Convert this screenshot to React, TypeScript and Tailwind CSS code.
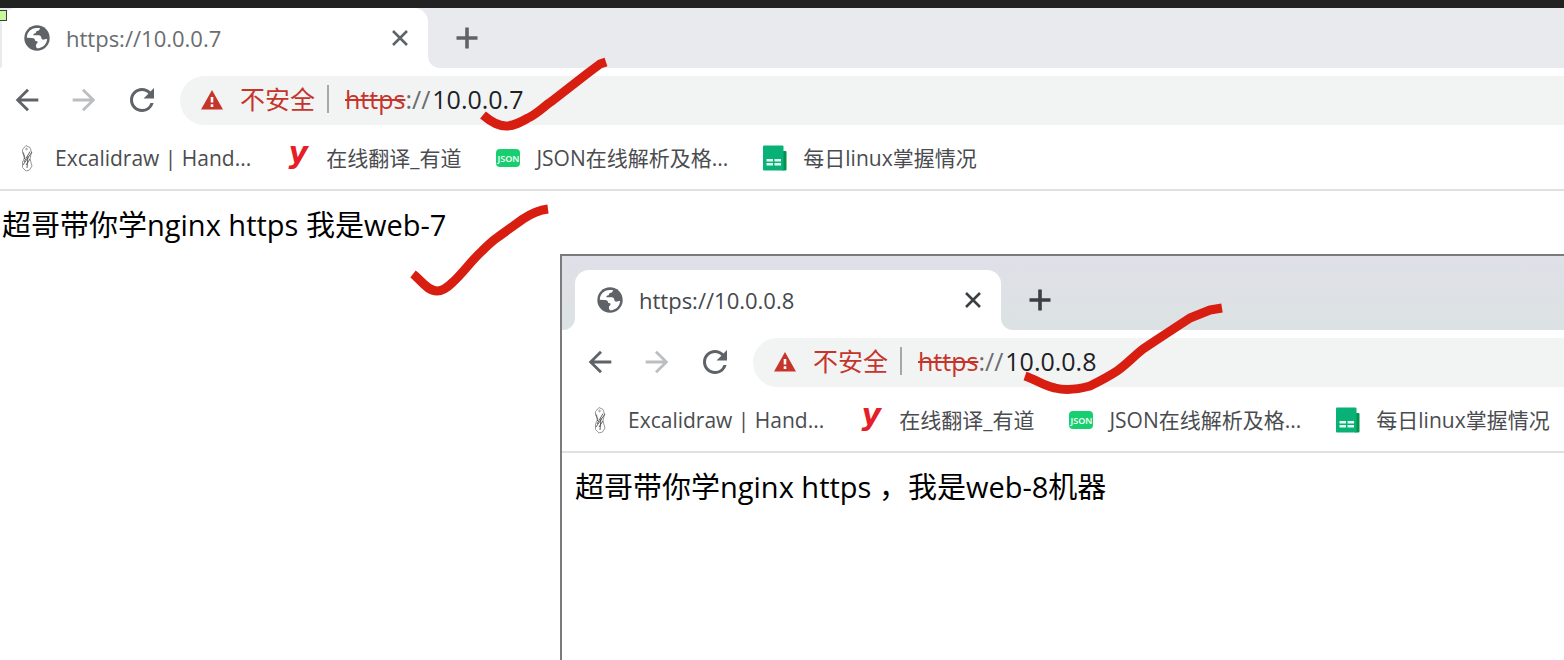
import React from "react";
import { MdArrowBack, MdArrowForward, MdRefresh } from "react-icons/md";

function GlobeIcon() {
  return (
    <svg viewBox="0 0 26 26" className="size-[26px] shrink-0" aria-hidden="true">
      <circle cx="13" cy="13" r="12.700" fill="currentColor" />
      <path
        fill="white"
        d="M2.800 12.800C3 7 7 3.200 12.500 3L16 3C15.800 5 14.500 5.800 13 6C12 6.200 12.200 7.500 11.500 8.300C10 8.500 9.300 9 9.300 10.200H14.800C16.500 10.400 17.400 11.600 17.400 13.200C17.800 14.500 19 14.900 20 14.500L23.200 13.700C22.700 19.500 18.500 23.200 13 23.300C11.800 22 11.800 20.700 12 19.800C12.200 18.800 13.600 18.500 13.600 17C13.600 15.900 12.300 16.200 11.300 16C11.100 13.800 10 12.900 8 12.900Z"
      />
    </svg>
  );
}

function CloseIcon() {
  return (
    <svg viewBox="0 0 20 20" className="size-5" fill="none" stroke="currentColor" strokeWidth="2.600" aria-hidden="true">
      <path d="M3 3L17 17M17 3L3 17" />
    </svg>
  );
}

function PlusIcon() {
  return (
    <svg viewBox="0 0 24 24" className="size-6" fill="none" stroke="currentColor" strokeWidth="3.600" aria-hidden="true">
      <path d="M12 1.500V22.500M1.500 12H22.500" />
    </svg>
  );
}

function WarningIcon() {
  return (
    <svg viewBox="0 0 24 24" className="size-6" aria-hidden="true">
      <path fill="currentColor" d="M12 3L23 22.500H1Z" />
      <path fill="white" d="M10.700 10h2.600v5.500h-2.600zM10.700 17.300h2.600v2.600h-2.600z" />
    </svg>
  );
}

function ExcalidrawIcon() {
  return (
    <svg viewBox="0 0 26 28" className="h-7 w-[26px]" fill="none" stroke="#8b8d90" strokeWidth="0.9" aria-hidden="true">
      <path d="M8.500 5.500L12 1.500L16 3.500L17.500 8L16 15L18 22L15.500 26L12 27L8.500 23.500L8.500 18L11 13L8.500 9Z" />
      <path d="M18 8L9 21M16 7.500L10 18M9.500 8.500L10.500 15M14 12L13 24M16 15L12 21" stroke="#505255" />
      <circle cx="12.500" cy="5" r="0.8" />
    </svg>
  );
}

function SheetIcon() {
  return (
    <svg viewBox="0 0 26 26" className="size-[26px]" aria-hidden="true">
      <path fill="#07914d" d="M20 6h3.500a1 1 0 0 1 1 1v17.500a1 1 0 0 1-1 1H20z" />
      <rect x="1" y="0.500" width="20.500" height="25" rx="1" fill="#08b176" />
      <path fill="#e6fff4" d="M4.500 14h6.500v2.500H4.500zM12.500 14H19v2.500h-6.500zM4.500 18h6.500v2.500H4.500zM12.500 18H19v2.500h-6.500z" />
    </svg>
  );
}

const bookmarks = [
  { label: "Excalidraw | Hand...", icon: <ExcalidrawIcon /> },
  {
    label: "在线翻译_有道",
    icon: (
      <span className="pb-2.5 font-['DejaVu_Sans',sans-serif] text-[30px] leading-[26px] font-bold text-[#e61e28] italic" aria-hidden="true">
        y
      </span>
    ),
  },
  {
    label: "JSON在线解析及格...",
    icon: (
      <span className="flex h-[18px] w-6 items-center justify-center rounded bg-[#18cf70] text-[9px] leading-none font-semibold text-white" aria-hidden="true">
        JSON
      </span>
    ),
  },
  { label: "每日linux掌握情况", icon: <SheetIcon /> },
];

type BrowserProps = {
  id: string;
  host: string;
  message: string;
  active?: boolean;
};

function Browser({ id, host, message, active = false }: BrowserProps) {
  const strip = active ? "bg-linear-to-b from-[#dfe0e8] to-[#dce2e3]" : "bg-[#e9eaed]";
  const corner = active ? "bg-[#dce2e3]" : "bg-[#e9eaed]";
  const inset = active ? "pl-[13px]" : "pl-0.5";
  const edge = active ? "w-[13px]" : "w-0.5";

  return (
    <section className="bg-white" aria-label={`https://${host}`}>
      <header className={`flex ${strip} ${active ? "pt-3.5" : ""}`}>
        <div className={`flex shrink-0 flex-col justify-end ${edge}`}>
          <div className="h-3.5 bg-white">
            <div className={`h-full rounded-br-xl ${corner}`} />
          </div>
        </div>
        <div className="flex h-[60px] w-[426px] shrink-0 items-center rounded-t-[14px] bg-white pr-[18px] pl-[22px]">
          <button type="button" className={`flex flex-1 items-center gap-4 text-left text-[22px] leading-8 ${active ? "text-[#45484c]" : "text-[#6a6d70]"}`}>
            <span className="text-[#5f6368]"><GlobeIcon /></span>
            https://{host}
          </button>
          <button type="button" aria-label="Close tab" className={active ? "text-[#3c4043]" : "text-[#5f6368]"}>
            <CloseIcon />
          </button>
        </div>
        <div className="flex flex-1 items-center">
          <div className="flex w-3.5 flex-col justify-end self-stretch">
            <div className="h-3.5 bg-white">
              <div className={`h-full rounded-bl-xl ${corner}`} />
            </div>
          </div>
          <button type="button" aria-label="New tab" className={`ml-[13px] ${active ? "text-[#3c4043]" : "text-[#5f6368]"}`}>
            <PlusIcon />
          </button>
        </div>
      </header>

      <div className={`flex h-[57px] items-end ${inset}`}>
        <nav className="flex h-[49px] items-center gap-[23px] pr-5 pb-0.5 pl-2 text-[#5f6368]" aria-label="History">
          <button type="button" aria-label="Back"><MdArrowBack className="size-[34px]" /></button>
          <button type="button" aria-label="Forward" className="text-[#bcbec0]"><MdArrowForward className="size-[34px]" /></button>
          <button type="button" aria-label="Reload"><MdRefresh className="size-9" /></button>
        </nav>
        <div className="flex h-[49px] min-w-0 flex-1 items-center rounded-l-full bg-[#f2f4f4] pb-[3px] pl-5 text-[25px] leading-8">
          <button type="button" className="flex items-center gap-4 text-[#c5352b]">
            <WarningIcon />
            不安全
          </button>
          <span className="mx-3 h-7 w-0.5 bg-[#a5a7aa]" />
          <label htmlFor={`${id}-address`} className="ml-1 text-[#6a6d70]">
            <s className="text-[#c5352b] decoration-2">https</s>://
          </label>
          <input
            id={`${id}-address`}
            defaultValue={host}
            className="min-w-0 flex-1 bg-transparent pl-0.5 text-[#202124] outline-none"
          />
        </div>
      </div>

      <nav className={`flex h-[66px] items-center gap-[34px] border-b-2 border-[#dfe0e1] pt-0.5 ${inset}`} aria-label="Bookmarks">
        {bookmarks.map(({ label, icon }, i) => (
          <a key={label} href="#" className={`flex shrink-0 items-center gap-[15px] text-[21px] leading-7 whitespace-nowrap text-[#4a4c50] ${i === 0 ? "ml-3" : ""}`}>
            <span className="flex h-7 w-[26px] items-center justify-center">{icon}</span>
            {label}
          </a>
        ))}
      </nav>

      <p className={`pt-3.5 text-[29px] leading-10 text-black ${inset}`}>{message}</p>
    </section>
  );
}

function CheckMarks() {
  return (
    <svg
      viewBox="0 0 1564 660"
      className="pointer-events-none absolute top-0 left-0 h-[660px] w-[1564px]"
      fill="none"
      stroke="#d81e10"
      strokeWidth="9"
      strokeLinejoin="round"
      aria-hidden="true"
    >
      <path d="M483 115C490 121 497 126 506 126C514 126 521 122 528 118C537 114 543 107 552 101L588 73L600 64L606 62" />
      <path d="M413 274C421 280 427 291 437 291C443 291 448 287 453 282C463 273 471 261 482 251C487 246 492 241 498 237L523 219C532 213 540 210 548 209" />
      <path d="M1025 376C1037 380 1044 386 1055 388C1067 391 1079 389 1090 386C1100 381 1108 377 1117 371C1126 365 1134 356 1143 349L1155 341L1190 318L1210 310L1222 308" />
    </svg>
  );
}

export default function App() {
  return (
    <main className="relative min-h-screen overflow-hidden bg-white font-['Open_Sans','Noto_Sans_CJK_SC',sans-serif]">
      <div className="h-2 bg-[#222222]" />
      <Browser id="web-7" host="10.0.0.7" message="超哥带你学nginx https 我是web-7" />
      <div className="absolute top-2.5 -left-1 h-[11px] w-[11px] border border-[#3a4230] bg-[#c9f79d]" />
      <div className="absolute top-[254px] right-0 bottom-0 left-[560px] overflow-hidden border-t-2 border-l-2 border-[#7b7b7d] bg-white">
        <Browser id="web-8" host="10.0.0.8" message="超哥带你学nginx https ，我是web-8机器" active />
      </div>
      <CheckMarks />
    </main>
  );
}
